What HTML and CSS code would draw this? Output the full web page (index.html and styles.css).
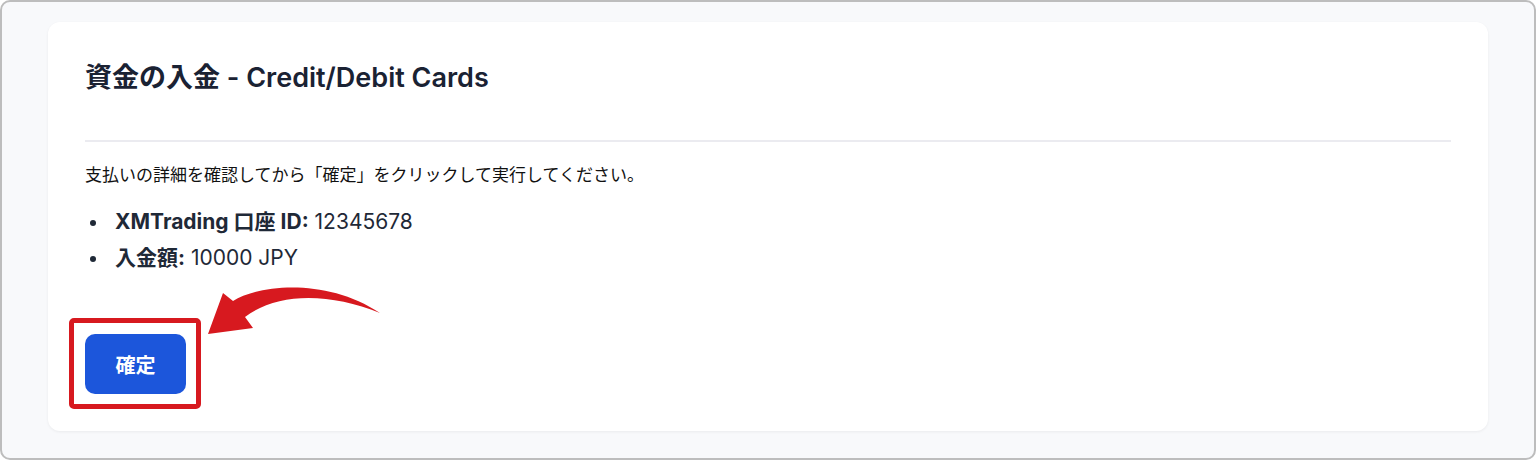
FILE: index.html
```html
<!DOCTYPE html>
<html lang="ja">

<head>
    <meta charset="UTF-8">
    <meta name="viewport" content="width=device-width, initial-scale=1.0">
    <title>資金の入金 - Credit/Debit Cards</title>
    <link rel="stylesheet" href="styles.css">
</head>

<body>

    <div class="frame">
        <section class="card">
            <h1>資金の入金 - Credit/Debit Cards</h1>
            <hr class="divider">

            <p class="note">支払いの詳細を確認してから「確定」をクリックして実行してください。</p>

            <ul class="details">
                <li><strong>XMTrading 口座 ID:</strong> 12345678</li>
                <li><strong>入金額:</strong> 10000 JPY</li>
            </ul>

            <div class="confirm-wrap">
                <button class="confirm-btn">確定</button>
            </div>

            <!-- pointer arrow towards the confirm button -->
            <svg class="pointer" width="190" height="65" viewBox="0 0 190 65">
                <path d="M8 54 L23 13 L33 21 C60 4 128 -2 180 33 C130 13 78 12 45 37 L53 48 Z" fill="#d7191f"/>
            </svg>
        </section>
    </div>

</body>

</html>
```

FILE: styles.css
```css
html, body {
    margin: 0;
    padding: 0;
    height: 100%;
    font-family: Inter, "Noto Sans CJK JP", sans-serif;
}

.frame {
    box-sizing: border-box;
    height: 460px;
    border: 2px solid #bdbdbd;
    border-radius: 10px;
    background: #f8f9fb;
    padding: 20px 46px 29px;
}

.card {
    position: relative;
    box-sizing: border-box;
    height: 409px;
    background: #fff;
    border-radius: 12px;
    box-shadow: 0 1px 3px rgba(0, 0, 0, 0.06);
    padding: 40px 37px 37px;
}

.card h1 {
    margin: 0 0 46px;
    font-size: 27px;
    line-height: 32px;
    font-weight: 600;
    color: #1a2233;
}

.divider {
    border: none;
    border-top: 2px solid #ebebf0;
    margin: 0;
}

.note {
    margin: 18px 0 0;
    font-family: "Noto Sans CJK JP", sans-serif;
    font-size: 17px;
    line-height: 28px;
    color: #111;
}

.details {
    margin: 16px 0 0;
    padding-left: 30px;
    list-style: none;
    font-size: 21px;
    line-height: 36px;
    color: #1f2937;
}

.details li::before {
    content: "";
    display: inline-block;
    width: 6px;
    height: 6px;
    border-radius: 50%;
    background: #1f2937;
    margin: 0 19px 0 -25px;
    vertical-align: middle;
}

.details strong {
    font-weight: 700;
}

.confirm-wrap {
    position: relative;
    display: inline-block;
    margin-top: 58px;
}

/* red highlight box round the button */
.confirm-wrap::after {
    content: "";
    position: absolute;
    top: -16px;
    left: -16px;
    right: -15px;
    bottom: -15px;
    border: 5px solid #d7191f;
    border-radius: 5px;
}

.confirm-btn {
    display: block;
    width: 101px;
    height: 60px;
    border: none;
    border-radius: 10px;
    background: #1c56db;
    color: #fff;
    font-family: Inter, "Noto Sans CJK JP", sans-serif;
    font-size: 20px;
    font-weight: 700;
}

.pointer {
    position: absolute;
    left: 152px;
    top: 258px;
}
```
